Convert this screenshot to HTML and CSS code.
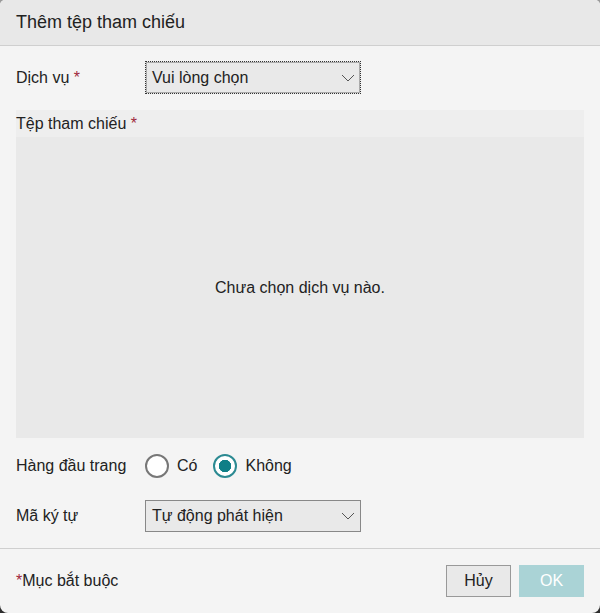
FILE: index.html
```html
<!DOCTYPE html>
<html lang="vi">
<head>
    <meta charset="UTF-8">
    <title>Thêm tệp tham chiếu</title>
    <link rel="stylesheet" href="styles.css">
</head>
<body>
    <div class="dialog">
        <div class="dialog-header">
            <h1>Thêm tệp tham chiếu</h1>
        </div>

        <div class="dialog-body">
            <div class="form-row">
                <label class="form-label">Dịch vụ <span class="req">*</span></label>
                <div class="select focused">
                    <span>Vui lòng chọn</span>
                    <svg class="chevron" width="14" height="8" viewBox="0 0 14 8"><path d="M1 1l6 6 6-6" fill="none" stroke="#555" stroke-width="1"/></svg>
                </div>
            </div>

            <div class="ref-box">
                <div class="ref-title">Tệp tham chiếu <span class="req">*</span></div>
                <div class="ref-empty">Chưa chọn dịch vụ nào.</div>
            </div>

            <div class="form-row radio-row">
                <label class="form-label">Hàng đầu trang</label>
                <div class="radios">
                    <label class="radio"><span class="dot"></span>Có</label>
                    <label class="radio checked"><span class="dot"></span>Không</label>
                </div>
            </div>

            <div class="form-row">
                <label class="form-label">Mã ký tự</label>
                <div class="select">
                    <span>Tự động phát hiện</span>
                    <svg class="chevron" width="14" height="8" viewBox="0 0 14 8"><path d="M1 1l6 6 6-6" fill="none" stroke="#555" stroke-width="1"/></svg>
                </div>
            </div>
        </div>

        <div class="dialog-footer">
            <span class="note"><span class="req">*</span>Mục bắt buộc</span>
            <div class="buttons">
                <button class="btn">Hủy</button>
                <button class="btn primary" disabled>OK</button>
            </div>
        </div>
    </div>
</body>
</html>
```

FILE: styles.css
```css
* {
    margin: 0;
    padding: 0;
    box-sizing: border-box;
}

body {
    font-family: 'Liberation Sans', Arial, sans-serif;
    background: linear-gradient(#9a9a9a, #2e2e2e);
    color: #222;
    width: 600px;
    height: 613px;
    overflow: hidden;
}

.dialog {
    width: 600px;
    height: 613px;
    background-color: #f4f4f4;
    border-radius: 5px 5px 8px 8px;
    overflow: hidden;
    display: flex;
    flex-direction: column;
}

/* Header */
.dialog-header {
    height: 46px;
    background-color: #e8e8e8;
    border-bottom: 1px solid #cfcfcf;
    padding: 12px 16px 0;
}

.dialog-header h1 {
    font-size: 18px;
    font-weight: normal;
    color: #222;
}

/* Body */
.dialog-body {
    padding: 15px 16px 0;
    flex: 1;
}

.form-row {
    display: flex;
    align-items: center;
    font-size: 16px;
}

.form-label {
    width: 129px;
}

.req {
    color: #a0283c;
}

.select {
    width: 216px;
    height: 33px;
    background-color: #e9e9e9;
    border: 1px solid #888;
    display: flex;
    align-items: center;
    justify-content: space-between;
    padding: 0 5px 0 6px;
    font-size: 16px;
}

.select.focused {
    border: 1px dotted #333;
    outline: 1px solid #aaa;
    outline-offset: -2px;
}

/* Reference file box */
.ref-box {
    margin-top: 16px;
    height: 328px;
    display: flex;
    flex-direction: column;
}

.ref-title {
    height: 27px;
    background-color: #eeeeee;
    font-size: 16px;
    padding-top: 5px;
}

.ref-empty {
    flex: 1;
    background-color: #e9e9e9;
    display: flex;
    align-items: center;
    justify-content: center;
    font-size: 16px;
}

/* Radios */
.radio-row {
    margin-top: 14px;
    height: 28px;
}

.radios {
    display: flex;
    gap: 16px;
}

.radio {
    display: flex;
    align-items: center;
    gap: 8px;
}

.dot {
    width: 24px;
    height: 24px;
    border-radius: 50%;
    border: 2px solid #777;
    background-color: #fff;
    display: inline-block;
}

.radio.checked .dot {
    border-color: #2c8a92;
    background: radial-gradient(circle, #0f7f87 0 6px, #fff 6.5px);
}

.radio-row + .form-row {
    margin-top: 20px;
}

.radio-row + .form-row .select {
    height: 32px;
}

/* Footer */
.dialog-footer {
    height: 65px;
    border-top: 1px solid #cfcfcf;
    display: flex;
    align-items: center;
    justify-content: space-between;
    padding: 0 16px 0 16px;
    font-size: 16px;
}

.buttons {
    display: flex;
    gap: 8px;
}

.btn {
    width: 65px;
    height: 32px;
    font-family: inherit;
    font-size: 16px;
    background-color: #e9e9e9;
    border: 1px solid #999;
    color: #222;
}

.btn.primary {
    background-color: #aad3d6;
    border-color: #aad3d6;
    color: #fff;
}
```
